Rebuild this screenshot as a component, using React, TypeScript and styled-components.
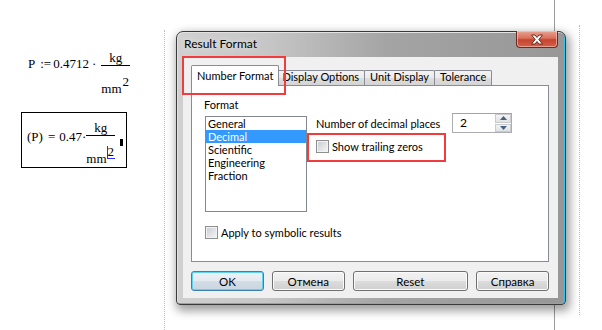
import React from "react";
import styled, { createGlobalStyle } from "styled-components";

const Global = createGlobalStyle`
  html, body { margin: 0; padding: 0; background: #ffffff; }
  body { width: 602px; height: 330px; overflow: hidden; }
`;

const Desk = styled.div`
  position: relative;
  width: 602px;
  height: 330px;
  display: flex;
  align-items: flex-start;
  overflow: hidden;
  background: #ffffff;
`;

const Sheet = styled.div`
  flex: none;
  width: 165px;
  height: 300px;
  margin-top: 30px;
  box-sizing: border-box;
  border-right: 1px dotted #b9b9b9;
  display: flex;
  flex-direction: column;
  align-items: flex-start;
  font-family: "Liberation Serif", "Times New Roman", serif;
  font-size: 13px;
  color: #000;
`;

const MathLine = styled.div`
  display: flex;
  align-items: flex-start;
  margin: 21px 0 0 28px;
`;

const ResultBox = styled.div`
  display: flex;
  align-items: flex-start;
  width: 106px;
  height: 56px;
  box-sizing: border-box;
  margin: 16px 0 0 21px;
  padding: 8px 0 0 5px;
  border: 1px solid #000;
`;

const Token = styled.span<{ $drop: number; $gap?: number }>`
  white-space: pre;
  line-height: 14px;
  margin-top: ${(p) => p.$drop}px;
  margin-left: ${(p) => p.$gap ?? 0}px;
`;

const Fraction = styled.span<{ $gap: number }>`
  display: flex;
  flex-direction: column;
  align-items: center;
  margin-left: ${(p) => p.$gap}px;
`;

const Num = styled.span`
  line-height: 14px;
`;

const Bar = styled.span`
  align-self: stretch;
  height: 1px;
  background: #000;
`;

const Den = styled.span`
  line-height: 14px;
  margin-top: 10px;
  white-space: pre;
`;

const Sup = styled.span<{ $edit?: boolean }>`
  display: inline-block;
  vertical-align: 7px;
  line-height: 12px;
  padding: 0 1px 0 ${(p) => (p.$edit ? 0 : 1)}px;
  border-left: ${(p) => (p.$edit ? "1px solid #2a2aff" : "none")};
  border-bottom: ${(p) => (p.$edit ? "1px solid #2a2aff" : "none")};
`;

const Caret = styled.span`
  width: 3px;
  height: 7px;
  margin: 18px 0 0 5px;
  background: #000;
`;

const RightGuide = styled.div`
  flex: none;
  width: 0;
  height: 290px;
  margin: 25px 0 0 13px;
  border-left: 1px dotted #b9b9b9;
`;

const BackLine = styled.div`
  position: absolute;
  left: 554px;
  top: 0;
  width: 1px;
  height: 330px;
  background: #9c9c9c;
  z-index: 0;
`;

/* ---------- dialog ---------- */

const Window = styled.div`
  position: relative;
  z-index: 1;
  flex: none;
  width: 390px;
  height: 274px;
  box-sizing: border-box;
  margin: 31px 0 0 11px;
  display: flex;
  flex-direction: column;
  padding: 0 7px 6px 6px;
  border: 1px solid #3a3a3a;
  border-radius: 7px 7px 4px 4px;
  background: linear-gradient(90deg, #d0d0d0 0px, #c6c6c6 90px, #a4a4a4 210px, #979797 100%);
  box-shadow: inset -1px -1px 0 #38c4e8, inset 1px 1px 0 #e2e2e2, 2px 4px 10px 2px rgba(0, 0, 0, 0.38);
  font-family: "Lato", "Liberation Sans", sans-serif;
  font-size: 11px;
  color: #000;
`;

const TitleBar = styled.div`
  flex: none;
  height: 25px;
  display: flex;
  justify-content: space-between;
  align-items: flex-start;
`;

const Title = styled.span`
  font-size: 12px;
  line-height: 24px;
  padding-left: 1px;
  text-shadow: 0 0 6px #f2f2f2;
`;

const CloseButton = styled.div`
  width: 42px;
  height: 17px;
  margin-top: -1px;
  box-sizing: border-box;
  display: flex;
  align-items: center;
  justify-content: center;
  border: 1px solid #6e2a22;
  border-top: none;
  border-radius: 0 0 4px 4px;
  background: linear-gradient(#e9a493 0%, #d9705c 45%, #c5432e 55%, #d1634c 100%);
  box-shadow: inset 0 0 0 1px rgba(255, 210, 200, 0.55);
`;

const Client = styled.div`
  flex: 1;
  display: flex;
  flex-direction: column;
  padding: 8px 9px 7px 8px;
  background: #f0f0f0;
`;

const TabStrip = styled.div`
  flex: none;
  height: 20px;
  display: flex;
  align-items: flex-end;
  padding-left: 2px;
  position: relative;
  z-index: 2;
`;

const Tab = styled.div<{ $active?: boolean }>`
  box-sizing: border-box;
  height: ${(p) => (p.$active ? 21 : 15)}px;
  margin: ${(p) => (p.$active ? "0 -2px -1px -2px" : "0 0 0 -1px")};
  padding: ${(p) => (p.$active ? "3px 5px 0" : "0 5px")};
  line-height: ${(p) => (p.$active ? 14 : 12)}px;
  border: 1px solid #898c95;
  border-bottom: none;
  border-radius: 2px 2px 0 0;
  background: ${(p) =>
    p.$active ? "#ffffff" : "linear-gradient(#f3f3f3 0%, #ebebeb 50%, #dedede 50%, #d4d4d4 100%)"};
  position: relative;
  z-index: ${(p) => (p.$active ? 2 : 1)};
  white-space: nowrap;
  &:first-child { margin-left: -2px; }
`;

const Panel = styled.div`
  flex: none;
  height: 177px;
  box-sizing: border-box;
  border: 1px solid #898c95;
  background: #ffffff;
  padding: 11px 0 0 13px;
  display: flex;
  flex-direction: column;
`;

const PanelTop = styled.div`
  display: flex;
  align-items: flex-start;
`;

const FormatGroup = styled.div`
  display: flex;
  flex-direction: column;
`;

const GroupLabel = styled.span`
  line-height: 15px;
  margin-left: -1px;
`;

const ListBox = styled.div`
  width: 102px;
  height: 96px;
  box-sizing: border-box;
  margin-top: 4px;
  border: 1px solid #828790;
  display: flex;
  flex-direction: column;
  background: #fff;
`;

const ListItem = styled.div<{ $selected?: boolean }>`
  height: 13px;
  line-height: 13px;
  padding-left: 2px;
  background: ${(p) => (p.$selected ? "#3399ff" : "transparent")};
  color: ${(p) => (p.$selected ? "#ffffff" : "#000000")};
`;

const OptionsCol = styled.div`
  margin: 16px 0 0 9px;
  display: flex;
  flex-direction: column;
`;

const FieldRow = styled.div`
  height: 20px;
  display: flex;
  align-items: center;
`;

const FieldLabel = styled.span`
  width: 136px;
`;

const SpinBox = styled.div`
  width: 60px;
  height: 20px;
  box-sizing: border-box;
  border: 1px solid #abadb3;
  border-top-color: #9fa3aa;
  display: flex;
  background: #fff;
`;

const SpinValue = styled.span`
  flex: 1;
  padding-left: 7px;
  line-height: 18px;
  font-size: 12px;
`;

const SpinButtons = styled.div`
  width: 16px;
  display: flex;
  flex-direction: column;
  gap: 1px;
`;

const SpinHalf = styled.div`
  flex: 1;
  display: flex;
  align-items: center;
  justify-content: center;
  box-sizing: border-box;
  border: 1px solid #c9cbcf;
  background: linear-gradient(#f4f4f4, #e0e1e3);
`;

const CheckRow = styled.div<{ $top: number }>`
  display: flex;
  align-items: center;
  height: 13px;
  margin-top: ${(p) => p.$top}px;
`;

const CheckBox = styled.span`
  flex: none;
  width: 13px;
  height: 13px;
  box-sizing: border-box;
  border: 1px solid #8e8f8f;
  background: linear-gradient(135deg, #c7cbd1 0%, #e1e3e6 55%, #f7f7f7 100%);
  box-shadow: inset 0 0 0 1px #f3f3f3;
`;

const CheckText = styled.span`
  margin-left: 3px;
  line-height: 13px;
  white-space: nowrap;
`;

const ButtonRow = styled.div`
  flex: none;
  margin-top: 9px;
  display: flex;
  gap: 8px;
`;

const Button = styled.div<{ $w: number; $default?: boolean }>`
  width: ${(p) => p.$w}px;
  height: 20px;
  box-sizing: border-box;
  display: flex;
  align-items: center;
  justify-content: center;
  border: 1px solid ${(p) => (p.$default ? "#3c7fb1" : "#707070")};
  border-radius: 3px;
  background: ${(p) =>
    p.$default
      ? "linear-gradient(#eef3f7 0%, #e3eaf0 50%, #d3dde6 50%, #c9d5e0 100%)"
      : "linear-gradient(#f2f2f2 0%, #ebebeb 50%, #dddddd 50%, #cfcfcf 100%)"};
  box-shadow: ${(p) => (p.$default ? "inset 0 0 0 1px #5fd3f3" : "inset 0 0 0 1px #fbfbfb")};
  font-size: 11.5px;
`;

const Highlight = styled.div<{ $x: number; $y: number; $w: number; $h: number }>`
  position: absolute;
  left: ${(p) => p.$x}px;
  top: ${(p) => p.$y}px;
  width: ${(p) => p.$w}px;
  height: ${(p) => p.$h}px;
  box-sizing: border-box;
  border: 2px solid #f03c3c;
  z-index: 5;
  pointer-events: none;
`;

const Arrow = ({ up }: { up?: boolean }) => (
  <svg width="7" height="4" viewBox="0 0 7 4">
    <path d={up ? "M0 4 L3.5 0 L7 4 Z" : "M0 0 L3.5 4 L7 0 Z"} fill="#4a5f80" />
  </svg>
);

const CloseGlyph = () => (
  <svg width="14" height="11" viewBox="0 0 14 11">
    <path
      d="M1.5 1 L5 1 L7 3.5 L9 1 L12.5 1 L8.8 5.5 L12.5 10 L9 10 L7 7.5 L5 10 L1.5 10 L5.2 5.5 Z"
      fill="#ffffff"
      stroke="#5a2018"
      strokeWidth="0.9"
      strokeLinejoin="round"
    />
  </svg>
);

export default function App() {
  return (
    <>
      <Global />
      <Desk>
        <BackLine />
        <Sheet>
          <MathLine>
            <Token $drop={6}>P</Token>
            <Token $drop={6} $gap={5}>:=</Token>
            <Token $drop={6} $gap={2}>0.4712</Token>
            <Token $drop={6} $gap={3}>·</Token>
            <Fraction $gap={5}>
              <Num>kg</Num>
              <Bar />
              <Den>
                mm<Sup>2</Sup>
              </Den>
            </Fraction>
          </MathLine>
          <ResultBox>
            <Token $drop={9}>(P)</Token>
            <Token $drop={9} $gap={5}>=</Token>
            <Token $drop={9} $gap={4}>0.47</Token>
            <Token $drop={9}>·</Token>
            <Fraction $gap={0}>
              <Num>kg</Num>
              <Bar />
              <Den>
                mm<Sup $edit>2</Sup>
              </Den>
            </Fraction>
            <Caret />
          </ResultBox>
        </Sheet>

        <Window>
          <TitleBar>
            <Title>Result Format</Title>
            <CloseButton>
              <CloseGlyph />
            </CloseButton>
          </TitleBar>
          <Client>
            <TabStrip>
              <Tab $active>Number Format</Tab>
              <Tab>Display Options</Tab>
              <Tab>Unit Display</Tab>
              <Tab>Tolerance</Tab>
            </TabStrip>
            <Panel>
              <PanelTop>
                <FormatGroup>
                  <GroupLabel>Format</GroupLabel>
                  <ListBox>
                    <ListItem>General</ListItem>
                    <ListItem $selected>Decimal</ListItem>
                    <ListItem>Scientific</ListItem>
                    <ListItem>Engineering</ListItem>
                    <ListItem>Fraction</ListItem>
                  </ListBox>
                </FormatGroup>
                <OptionsCol>
                  <FieldRow>
                    <FieldLabel>Number of decimal places</FieldLabel>
                    <SpinBox>
                      <SpinValue>2</SpinValue>
                      <SpinButtons>
                        <SpinHalf>
                          <Arrow up />
                        </SpinHalf>
                        <SpinHalf>
                          <Arrow />
                        </SpinHalf>
                      </SpinButtons>
                    </SpinBox>
                  </FieldRow>
                  <CheckRow $top={7}>
                    <CheckBox />
                    <CheckText>Show trailing zeros</CheckText>
                  </CheckRow>
                </OptionsCol>
              </PanelTop>
              <CheckRow $top={14}>
                <CheckBox />
                <CheckText>Apply to symbolic results</CheckText>
              </CheckRow>
            </Panel>
            <ButtonRow>
              <Button $w={73} $default>OK</Button>
              <Button $w={73}>Отмена</Button>
              <Button $w={116}>Reset</Button>
              <Button $w={73}>Справка</Button>
            </ButtonRow>
          </Client>
        </Window>
        <RightGuide />
        <Highlight $x={182} $y={56} $w={104} $h={39} />
        <Highlight $x={307} $y={133} $w={139} $h={29} />
      </Desk>
    </>
  );
}
